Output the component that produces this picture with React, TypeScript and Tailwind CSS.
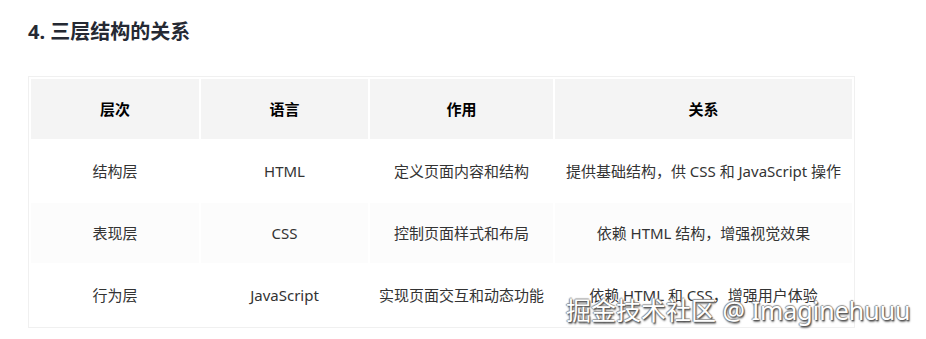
import React from "react";

const rows = [
  ["结构层", "HTML", "定义页面内容和结构", "提供基础结构，供 CSS 和 JavaScript 操作"],
  ["表现层", "CSS", "控制页面样式和布局", "依赖 HTML 结构，增强视觉效果"],
  ["行为层", "JavaScript", "实现页面交互和动态功能", "依赖 HTML 和 CSS，增强用户体验"],
];

export default function App() {
  return (
    <div
      className="relative w-[926px] h-[339px] bg-white overflow-hidden text-[#333]"
      style={{ fontFamily: '"Segoe UI", "Noto Sans", "Noto Sans CJK SC", sans-serif' }}
    >
      <div className="pl-[28px] pt-[18px]">
        <h3 className="text-[20px] leading-[28px] font-bold text-[#252933]">4. 三层结构的关系</h3>
        <table className="mt-[30px] border border-[#f0f0f0] border-separate border-spacing-[2px] text-[15px]">
          <thead>
            <tr>
              <th className="w-[168px] h-[60px] bg-[#f4f4f4] font-bold text-black text-center">层次</th>
              <th className="w-[167px] h-[60px] bg-[#f4f4f4] font-bold text-black text-center">语言</th>
              <th className="w-[183px] h-[60px] bg-[#f4f4f4] font-bold text-black text-center">作用</th>
              <th className="w-[297px] h-[60px] bg-[#f4f4f4] font-bold text-black text-center">关系</th>
            </tr>
          </thead>
          <tbody>
            {rows.map((r, i) => (
              <tr key={i} className={i === 1 ? "bg-[#fcfcfc]" : "bg-white"}>
                {r.map((c, j) => (
                  <td key={j} className="h-[60px] p-0 text-center text-[#333] whitespace-nowrap">
                    {c}
                  </td>
                ))}
              </tr>
            ))}
          </tbody>
        </table>
      </div>
      <div
        className="absolute left-[566px] top-[292px] text-[25px] leading-[36px] text-white whitespace-nowrap"
        style={{
          fontFamily: '"Noto Sans", "Noto Sans CJK SC", sans-serif',
          textShadow: "1px 1px 1px #555, -1px 0 1px #888, 0 -1px 1px #999, 1px 2px 2px #777",
        }}
      >
        掘金技术社区 @ Imaginehuuu
      </div>
    </div>
  );
}
